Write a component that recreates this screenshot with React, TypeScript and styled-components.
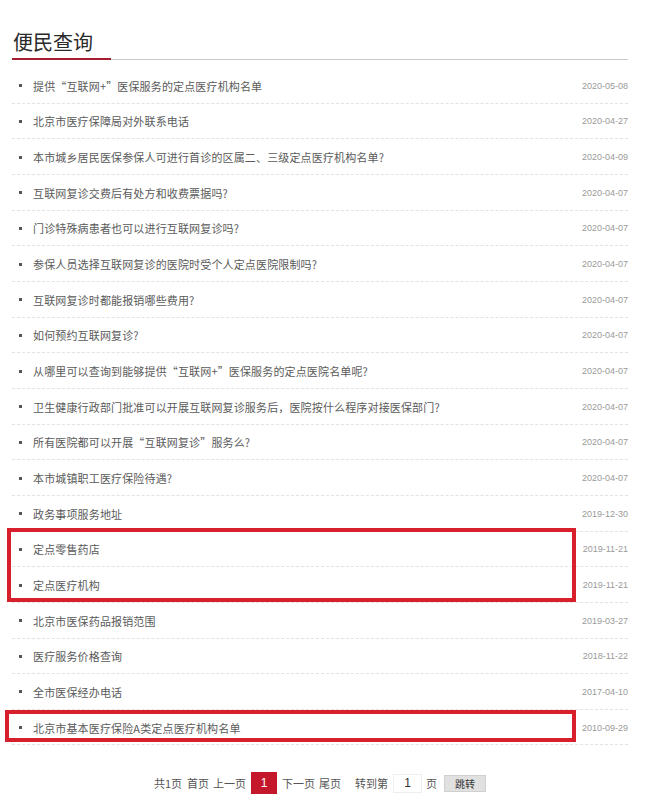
import React from "react";
import styled, { createGlobalStyle } from "styled-components";

const GlobalStyle = createGlobalStyle`
	html, body {
		margin: 0;
		padding: 0;
		background: #fff;
	}
	body {
		font-family: "Liberation Sans", "Noto Sans CJK SC", sans-serif;
	}
`;

type Item = { title: string; date: string };

const items: Item[] = [
	{ title: "提供“互联网+”医保服务的定点医疗机构名单", date: "2020-05-08" },
	{ title: "北京市医疗保障局对外联系电话", date: "2020-04-27" },
	{ title: "本市城乡居民医保参保人可进行首诊的区属二、三级定点医疗机构名单?", date: "2020-04-09" },
	{ title: "互联网复诊交费后有处方和收费票据吗?", date: "2020-04-07" },
	{ title: "门诊特殊病患者也可以进行互联网复诊吗?", date: "2020-04-07" },
	{ title: "参保人员选择互联网复诊的医院时受个人定点医院限制吗?", date: "2020-04-07" },
	{ title: "互联网复诊时都能报销哪些费用?", date: "2020-04-07" },
	{ title: "如何预约互联网复诊?", date: "2020-04-07" },
	{ title: "从哪里可以查询到能够提供“互联网+”医保服务的定点医院名单呢?", date: "2020-04-07" },
	{ title: "卫生健康行政部门批准可以开展互联网复诊服务后，医院按什么程序对接医保部门?", date: "2020-04-07" },
	{ title: "所有医院都可以开展“互联网复诊”服务么?", date: "2020-04-07" },
	{ title: "本市城镇职工医疗保险待遇?", date: "2020-04-07" },
	{ title: "政务事项服务地址", date: "2019-12-30" },
];

const marked1: Item[] = [
	{ title: "定点零售药店", date: "2019-11-21" },
	{ title: "定点医疗机构", date: "2019-11-21" },
];

const rest: Item[] = [
	{ title: "北京市医保药品报销范围", date: "2019-03-27" },
	{ title: "医疗服务价格查询", date: "2018-11-22" },
	{ title: "全市医保经办电话", date: "2017-04-10" },
];

const marked2: Item[] = [{ title: "北京市基本医疗保险A类定点医疗机构名单", date: "2010-09-29" }];

const Page = styled.div`
	padding: 29px 21px 40px 12px;
	width: 649px;
	box-sizing: border-box;
`;

const Header = styled.div`
	border-bottom: 1px solid #c9c9c9;
	display: flex;
`;

const Title = styled.h2`
	margin: 0 0 -1px;
	padding: 0 18px 3px 1px;
	font-family: "Noto Sans CJK SC", sans-serif;
	font-weight: 400;
	font-size: 20px;
	line-height: 26px;
	color: #2a2a2a;
	border-bottom: 2px solid #a51d2e;
`;

const List = styled.ul`
	list-style: none;
	margin: 8px 0 0;
	padding: 0;
`;

const Row = styled.li`
	height: 35.67px;
	box-sizing: border-box;
	border-bottom: 1px dashed #e2e2e2;
	display: flex;
	align-items: center;
	justify-content: space-between;
	padding-top: 1px;
`;

const Link = styled.a`
	display: flex;
	align-items: center;
	font-family: "Noto Sans CJK SC", sans-serif;
	font-size: 11px;
	letter-spacing: 0.15px;
	color: #5a5a5a;
	text-decoration: none;

	&::before {
		content: "";
		width: 3px;
		height: 3px;
		background: #555;
		margin: 0 11px 0 7px;
	}
`;

const DateText = styled.span`
	font-family: "Liberation Sans", sans-serif;
	font-size: 9px;
	color: #9a9a9a;
`;

const Marked = styled.div<{ $top: number; $bottom: number; $left: number }>`
	position: relative;

	&::after {
		content: "";
		position: absolute;
		top: ${(p) => p.$top}px;
		bottom: ${(p) => p.$bottom}px;
		left: ${(p) => p.$left}px;
		right: 52px;
		border: 4px solid #d8202d;
		pointer-events: none;
	}
`;

const Pager = styled.div`
	display: flex;
	justify-content: center;
	align-items: center;
	margin-top: 27px;
	font-family: "Noto Sans CJK SC", sans-serif;
	font-size: 11px;
	color: #555;
	height: 22px;
`;

const PagerText = styled.span<{ $gap?: number }>`
	margin-left: ${(p) => p.$gap ?? 5}px;
	&:first-child {
		margin-left: 0;
	}
`;

const Current = styled.span`
	margin-left: 5px;
	width: 26px;
	height: 22px;
	background: #c4172b;
	color: #fff;
	font-family: "Liberation Sans", sans-serif;
	font-size: 12px;
	display: flex;
	align-items: center;
	justify-content: center;
`;

const PageInput = styled.span`
	margin-left: 5px;
	width: 29px;
	height: 19px;
	border: 1px solid #eee;
	box-sizing: border-box;
	display: flex;
	align-items: center;
	justify-content: center;
	font-family: "Liberation Sans", sans-serif;
	font-size: 12px;
	color: #333;
`;

const JumpButton = styled.button`
	margin-left: 7px;
	width: 42px;
	height: 17px;
	padding: 0;
	border: 1px solid #d0d0d0;
	background: #e1e1e1;
	font-family: "Noto Sans CJK SC", sans-serif;
	font-size: 10px;
	color: #333;
	line-height: 15px;
`;

const renderRows = (list: Item[]) =>
	list.map((it, i) => (
		<Row key={i}>
			<Link href="#">{it.title}</Link>
			<DateText>{it.date}</DateText>
		</Row>
	));

const App = () => {
	return (
		<>
			<GlobalStyle />
			<Page>
				<Header>
					<Title>便民查询</Title>
				</Header>
				<List>
					{renderRows(items)}
					<Marked $top={-4} $bottom={1} $left={-5}>
						{renderRows(marked1)}
					</Marked>
					{renderRows(rest)}
					<Marked $top={0} $bottom={3} $left={-7}>
						{renderRows(marked2)}
					</Marked>
				</List>
				<Pager>
					<PagerText>共1页</PagerText>
					<PagerText>首页</PagerText>
					<PagerText $gap={4}>上一页</PagerText>
					<Current>1</Current>
					<PagerText>下一页</PagerText>
					<PagerText $gap={4}>尾页</PagerText>
					<PagerText $gap={14}>转到第</PagerText>
					<PageInput>1</PageInput>
					<PagerText $gap={4}>页</PagerText>
					<JumpButton>跳转</JumpButton>
				</Pager>
			</Page>
		</>
	);
};

export default App;
